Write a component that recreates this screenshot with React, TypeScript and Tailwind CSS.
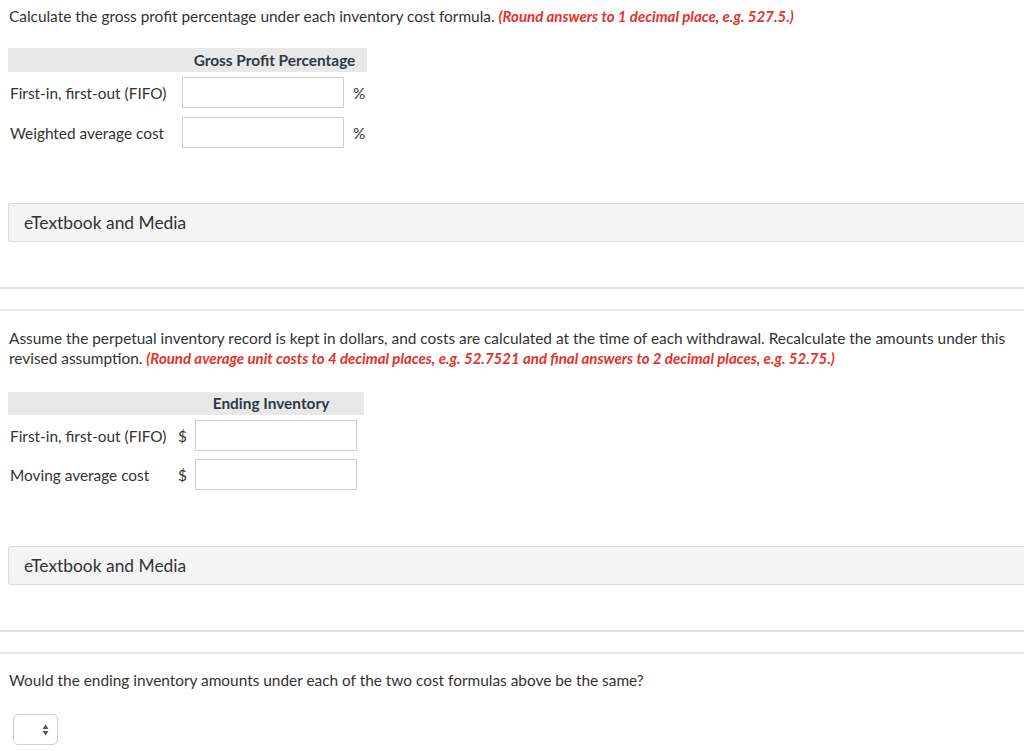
import React from 'react';

const FONT = { fontFamily: 'Lato, "Open Sans", sans-serif' };

const TextBox = ({ w }: { w: string }) => (
  <input type="text" className={`${w} h-[31px] border border-[#cfcfcf] bg-white outline-none`} />
);

const MediaBar = () => (
  <div className="ml-2 h-[39px] flex items-center pl-[15px] bg-[#f4f4f4] border border-r-0 border-[#dcdcdc] rounded-l-[3px] text-[17.4px] text-[#333]">
    eTextbook and Media
  </div>
);

const Divider = () => (
  <>
    <div className="h-[2px] bg-[#e4e4e4]" />
    <div className="h-[20px]" />
    <div className="h-[2px] bg-[#e8e8e8]" />
  </>
);

const App = () => {
  return (
    <div className="w-[1024px] min-h-[751px] bg-white text-[15.4px] leading-[20px] text-[#333] overflow-hidden" style={FONT}>
      {/* Part 1 */}
      <p className="pt-[6px] pl-[9px]">
        Calculate the gross profit percentage under each inventory cost formula.{' '}
        <span className="text-[#e4322b] text-[15px] font-bold italic">(Round answers to 1 decimal place, e.g. 527.5.)</span>
      </p>

      <div className="ml-2 mt-[22px] w-[359px]">
        <div className="grid grid-cols-[174px_185px] h-[24px] bg-[#e8e8e8]">
          <div />
          <div className="text-center font-bold text-[#2f3a44] leading-[24px]">Gross Profit Percentage</div>
        </div>
        <div className="mt-[5px] flex items-center h-[31px]">
          <span className="w-[174px] pl-[2px] whitespace-nowrap">First-in, first-out (FIFO)</span>
          <TextBox w="w-[162px]" />
          <span className="ml-[9px]">%</span>
        </div>
        <div className="mt-[9px] flex items-center h-[31px]">
          <span className="w-[174px] pl-[2px] whitespace-nowrap">Weighted average cost</span>
          <TextBox w="w-[162px]" />
          <span className="ml-[9px]">%</span>
        </div>
      </div>

      <div className="mt-[55px]">
        <MediaBar />
      </div>

      <div className="mt-[45px]">
        <Divider />
      </div>

      {/* Part 2 */}
      <p className="mt-[17px] pl-[9px] pr-[6px]">
        Assume the perpetual inventory record is kept in dollars, and costs are calculated at the time of each withdrawal. Recalculate the amounts under this revised assumption.{' '}
        <span className="text-[#e4322b] text-[15px] font-bold italic">
          (Round average unit costs to 4 decimal places, e.g. 52.7521 and final answers to 2 decimal places, e.g. 52.75.)
        </span>
      </p>

      <div className="ml-2 mt-[24px] w-[356px]">
        <div className="grid grid-cols-[170px_186px] h-[23px] bg-[#e8e8e8]">
          <div />
          <div className="text-center font-bold text-[#2f3a44] leading-[23px]">Ending Inventory</div>
        </div>
        <div className="mt-[5px] flex items-center h-[31px]">
          <span className="w-[168px] pl-[2px] whitespace-nowrap">First-in, first-out (FIFO)</span>
          <span className="w-[19px] pl-[2px]">$</span>
          <TextBox w="w-[162px]" />
        </div>
        <div className="mt-[8px] flex items-center h-[31px]">
          <span className="w-[168px] pl-[2px] whitespace-nowrap">Moving average cost</span>
          <span className="w-[19px] pl-[2px]">$</span>
          <TextBox w="w-[162px]" />
        </div>
      </div>

      <div className="mt-[56px]">
        <MediaBar />
      </div>

      <div className="mt-[45px]">
        <Divider />
      </div>

      {/* Part 3 */}
      <p className="mt-[16px] pl-[9px]">Would the ending inventory amounts under each of the two cost formulas above be the same?</p>

      <div className="mt-[24px] ml-[13px] w-[45px] h-[31px] border border-[#cfcfcf] rounded-[5px] bg-white flex items-center justify-end pr-[8px]">
        <svg width="7" height="12" viewBox="0 0 7 12">
          <path d="M3.5 0.5 L6.5 5 L0.5 5 Z" fill="#555" />
          <path d="M3.5 11.5 L6.5 7 L0.5 7 Z" fill="#555" />
        </svg>
      </div>
    </div>
  );
};

export default App;
